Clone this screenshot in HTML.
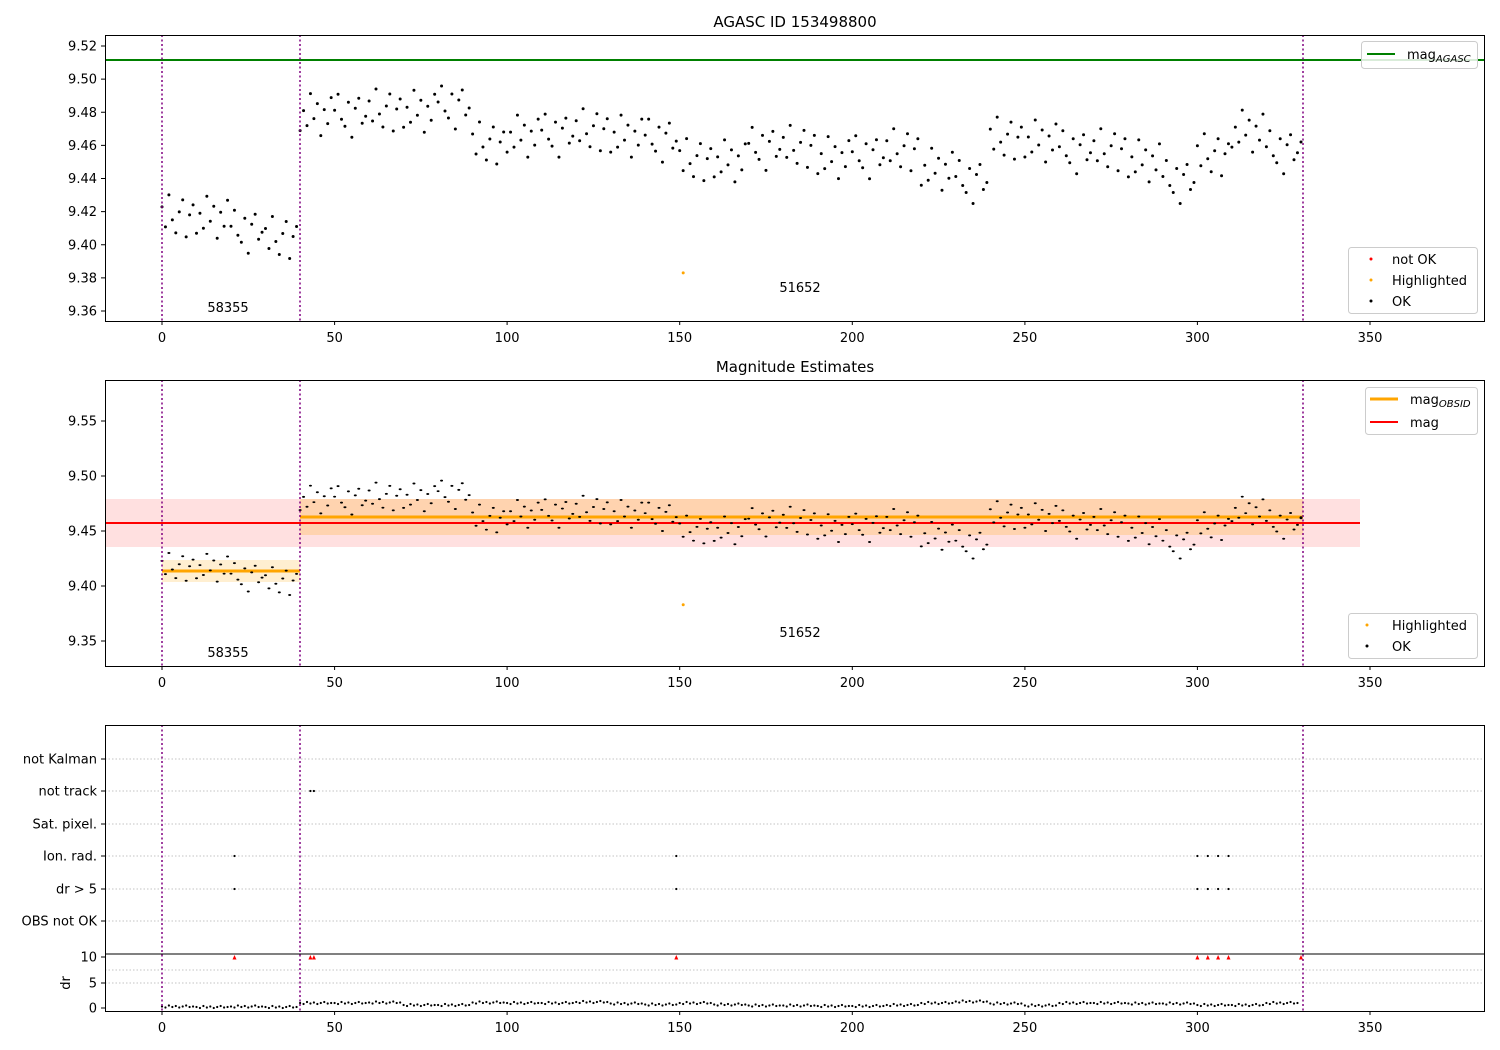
<!DOCTYPE html>
<html><head><meta charset="utf-8"><style>
html,body{margin:0;padding:0;background:#fff;}
svg{display:block;font-family:"DejaVu Sans","Liberation Sans",sans-serif;}
</style></head><body>
<svg width="1500" height="1050" viewBox="0 0 1500 1050" xmlns="http://www.w3.org/2000/svg">
<defs>
<path id="g0" d="M0 -8h0M3.45 12h0M6.9 -20h0M10.35 5h0M13.8 18h0M17.26 -3h0M20.7 -15h0M24.16 22h0M27.6 0h0M31.06 -10h0" stroke="#000" stroke-width="3" stroke-linecap="round" fill="none"/>
<path id="g1" d="M0 15h0M3.45 -5h0M6.9 10h0M10.35 -22h0M13.8 3h0M17.26 -12h0M20.7 20h0M24.16 -6h0M27.6 8h0M31.06 -18h0" stroke="#000" stroke-width="3" stroke-linecap="round" fill="none"/>
<path id="g2" d="M0 -2h0M3.45 -18h0M6.9 7h0M10.35 14h0M13.8 -10h0M17.26 25h0M20.7 -4h0M24.16 -14h0M27.6 11h0M31.06 4h0" stroke="#000" stroke-width="3" stroke-linecap="round" fill="none"/>
<path id="d0" d="M0 0h0M3.45 1h0M6.9 -1h0M10.35 0.5h0M13.8 -0.5h0M17.26 1h0M20.7 0h0M24.16 -1h0M27.6 0.5h0M31.06 0h0" stroke="#000" stroke-width="2.2" stroke-linecap="round" fill="none"/>
</defs>
<rect width="1500" height="1050" fill="#fff"/>
<g font-size="13" fill="#000">
<text x="795" y="27" text-anchor="middle" font-size="15">AGASC ID 153498800</text>
<text x="795" y="372" text-anchor="middle" font-size="15">Magnitude Estimates</text>

<rect x="105" y="499" width="1255" height="48" fill="#ff0000" fill-opacity="0.12"/>
<rect x="162" y="560" width="138" height="22" fill="#ffa500" fill-opacity="0.18"/>
<rect x="300" y="499" width="1003" height="36" fill="#ffa500" fill-opacity="0.22"/>
<line x1="105" y1="523" x2="1360" y2="523" stroke="#f00" stroke-width="2"/>
<line x1="162" y1="571" x2="300" y2="571" stroke="#ffa500" stroke-width="3"/>
<line x1="300" y1="517" x2="1303" y2="517" stroke="#ffa500" stroke-width="3"/>
<line x1="105" y1="60" x2="1485" y2="60" stroke="#008000" stroke-width="2"/>

<g stroke="#b0b0b0" stroke-width="0.8" stroke-dasharray="1.5,2">
<line x1="105" y1="759" x2="1485" y2="759"/><line x1="105" y1="791" x2="1485" y2="791"/>
<line x1="105" y1="824" x2="1485" y2="824"/><line x1="105" y1="856" x2="1485" y2="856"/>
<line x1="105" y1="889" x2="1485" y2="889"/><line x1="105" y1="921" x2="1485" y2="921"/>
<line x1="105" y1="983" x2="1485" y2="983"/><line x1="105" y1="970" x2="1485" y2="970"/>
</g>
<line x1="105" y1="954" x2="1485" y2="954" stroke="#000" stroke-width="1"/>

<!-- axes1 points -->
<g>
<use href="#g0" x="162" y="214.9"/><use href="#g1" x="196.5" y="218.3"/><use href="#g2" x="231" y="228.2"/><use href="#g0" x="265.5" y="236.5"/>
<use href="#g1" x="300.1" y="115.6"/><use href="#g2" x="334.6" y="112.3"/><use href="#g0" x="369.1" y="109"/><use href="#g1" x="403.6" y="112.3"/>
<use href="#g2" x="438.1" y="104"/><use href="#g0" x="472.6" y="142"/><use href="#g1" x="507.1" y="137.1"/><use href="#g2" x="541.7" y="132.1"/>
<use href="#g0" x="576.2" y="128.8"/><use href="#g1" x="610.7" y="137.1"/><use href="#g2" x="645.2" y="137.1"/><use href="#g0" x="679.7" y="158.6"/>
<use href="#g1" x="714.2" y="161.9"/><use href="#g2" x="748.7" y="145.4"/><use href="#g0" x="783.3" y="145.4"/><use href="#g1" x="817.8" y="158.6"/>
<use href="#g2" x="852.3" y="153.7"/><use href="#g0" x="886.8" y="148.7"/><use href="#g1" x="921.3" y="170.2"/><use href="#g2" x="955.8" y="178.5"/>
<use href="#g0" x="990.3" y="137.1"/><use href="#g1" x="1024.9" y="142"/><use href="#g2" x="1059.4" y="148.7"/><use href="#g0" x="1093.9" y="148.7"/>
<use href="#g1" x="1128.4" y="161.9"/><use href="#g2" x="1162.9" y="178.5"/><use href="#g0" x="1197.4" y="153.7"/><use href="#g1" x="1231.9" y="132.1"/>
<use href="#g2" x="1266.4" y="148.7"/>
<circle cx="1301" cy="142" r="1.5"/>
<circle cx="683.2" cy="272.9" r="1.5" fill="#ffa500"/>
</g>
<!-- axes2 points -->
<g>
<use href="#g0" transform="translate(162,566.2) scale(1,0.66)"/><use href="#g1" transform="translate(196.5,568.4) scale(1,0.66)"/><use href="#g2" transform="translate(231,575) scale(1,0.66)"/><use href="#g0" transform="translate(265.5,580.5) scale(1,0.66)"/>
<use href="#g1" transform="translate(300.1,500.2) scale(1,0.66)"/><use href="#g2" transform="translate(334.6,498) scale(1,0.66)"/><use href="#g0" transform="translate(369.1,495.8) scale(1,0.66)"/><use href="#g1" transform="translate(403.6,498) scale(1,0.66)"/>
<use href="#g2" transform="translate(438.1,492.5) scale(1,0.66)"/><use href="#g0" transform="translate(472.6,517.8) scale(1,0.66)"/><use href="#g1" transform="translate(507.1,514.5) scale(1,0.66)"/><use href="#g2" transform="translate(541.7,511.2) scale(1,0.66)"/>
<use href="#g0" transform="translate(576.2,509) scale(1,0.66)"/><use href="#g1" transform="translate(610.7,514.5) scale(1,0.66)"/><use href="#g2" transform="translate(645.2,514.5) scale(1,0.66)"/><use href="#g0" transform="translate(679.7,528.8) scale(1,0.66)"/>
<use href="#g1" transform="translate(714.2,531) scale(1,0.66)"/><use href="#g2" transform="translate(748.7,520) scale(1,0.66)"/><use href="#g0" transform="translate(783.3,520) scale(1,0.66)"/><use href="#g1" transform="translate(817.8,528.8) scale(1,0.66)"/>
<use href="#g2" transform="translate(852.3,525.5) scale(1,0.66)"/><use href="#g0" transform="translate(886.8,522.2) scale(1,0.66)"/><use href="#g1" transform="translate(921.3,536.5) scale(1,0.66)"/><use href="#g2" transform="translate(955.8,542) scale(1,0.66)"/>
<use href="#g0" transform="translate(990.3,514.5) scale(1,0.66)"/><use href="#g1" transform="translate(1024.9,517.8) scale(1,0.66)"/><use href="#g2" transform="translate(1059.4,522.2) scale(1,0.66)"/><use href="#g0" transform="translate(1093.9,522.2) scale(1,0.66)"/>
<use href="#g1" transform="translate(1128.4,531) scale(1,0.66)"/><use href="#g2" transform="translate(1162.9,542) scale(1,0.66)"/><use href="#g0" transform="translate(1197.4,525.5) scale(1,0.66)"/><use href="#g1" transform="translate(1231.9,511.2) scale(1,0.66)"/>
<use href="#g2" transform="translate(1266.4,522.2) scale(1,0.66)"/>
<circle cx="1301" cy="517.8" r="1.5"/>
<circle cx="683.2" cy="604.7" r="1.5" fill="#ffa500"/>
</g>
<!-- axes3 points -->
<g>
<use href="#d0" x="162" y="1006.5"/><use href="#d0" x="196.5" y="1007"/><use href="#d0" x="231" y="1006.5"/><use href="#d0" x="265.5" y="1007"/>
<use href="#d0" x="300.1" y="1003"/><use href="#d0" x="334.6" y="1003"/><use href="#d0" x="369.1" y="1002.5"/><use href="#d0" x="403.6" y="1005"/>
<use href="#d0" x="438.1" y="1005"/><use href="#d0" x="472.6" y="1002.5"/><use href="#d0" x="507.1" y="1003"/><use href="#d0" x="541.7" y="1003"/>
<use href="#d0" x="576.2" y="1002"/><use href="#d0" x="610.7" y="1003.5"/><use href="#d0" x="645.2" y="1004.5"/><use href="#d0" x="679.7" y="1003"/>
<use href="#d0" x="714.2" y="1004.5"/><use href="#d0" x="748.7" y="1005.5"/><use href="#d0" x="783.3" y="1005.5"/><use href="#d0" x="817.8" y="1006"/>
<use href="#d0" x="852.3" y="1006"/><use href="#d0" x="886.8" y="1005"/><use href="#d0" x="921.3" y="1003"/><use href="#d0" x="955.8" y="1001.5"/>
<use href="#d0" x="990.3" y="1003.5"/><use href="#d0" x="1024.9" y="1005.5"/><use href="#d0" x="1059.4" y="1003"/><use href="#d0" x="1093.9" y="1003"/>
<use href="#d0" x="1128.4" y="1003.5"/><use href="#d0" x="1162.9" y="1003.5"/><use href="#d0" x="1197.4" y="1005"/><use href="#d0" x="1231.9" y="1005"/>
<use href="#d0" x="1266.4" y="1003"/>
<g fill="#000">
<circle cx="310.4" cy="791" r="1.1"/><circle cx="313.9" cy="791" r="1.1"/>
<circle cx="234.5" cy="856" r="1.1"/><circle cx="676.3" cy="856" r="1.1"/><circle cx="1197.4" cy="856" r="1.1"/><circle cx="1207.8" cy="856" r="1.1"/><circle cx="1218.1" cy="856" r="1.1"/><circle cx="1228.5" cy="856" r="1.1"/>
<circle cx="234.5" cy="889" r="1.1"/><circle cx="676.3" cy="889" r="1.1"/><circle cx="1197.4" cy="889" r="1.1"/><circle cx="1207.8" cy="889" r="1.1"/><circle cx="1218.1" cy="889" r="1.1"/><circle cx="1228.5" cy="889" r="1.1"/>
</g>
<g fill="#f00">
<polygon points="232.5,959.5 236.5,959.5 234.5,955"/><polygon points="308.4,959.5 312.4,959.5 310.4,955"/><polygon points="311.9,959.5 315.9,959.5 313.9,955"/>
<polygon points="674.3,959.5 678.3,959.5 676.3,955"/><polygon points="1195.4,959.5 1199.4,959.5 1197.4,955"/><polygon points="1205.8,959.5 1209.8,959.5 1207.8,955"/>
<polygon points="1216.1,959.5 1220.1,959.5 1218.1,955"/><polygon points="1226.5,959.5 1230.5,959.5 1228.5,955"/><polygon points="1299,959.5 1303,959.5 1301,955"/>
</g>
</g>

<g stroke="#800080" stroke-width="1.5" stroke-dasharray="2,2.5">
<line x1="162" y1="35" x2="162" y2="321"/><line x1="300" y1="35" x2="300" y2="321"/><line x1="1303" y1="35" x2="1303" y2="321"/>
<line x1="162" y1="380" x2="162" y2="666"/><line x1="300" y1="380" x2="300" y2="666"/><line x1="1303" y1="380" x2="1303" y2="666"/>
<line x1="162" y1="725" x2="162" y2="1011"/><line x1="300" y1="725" x2="300" y2="1011"/><line x1="1303" y1="725" x2="1303" y2="1011"/>
</g>

<g fill="none" stroke="#000" stroke-width="1">
<rect x="105.5" y="35.5" width="1379" height="286"/>
<rect x="105.5" y="380.5" width="1379" height="286"/>
<rect x="105.5" y="725.5" width="1379" height="286"/>
</g>

<text x="228" y="312" text-anchor="middle">58355</text>
<text x="800" y="292" text-anchor="middle">51652</text>
<text x="228" y="657" text-anchor="middle">58355</text>
<text x="800" y="637" text-anchor="middle">51652</text>

<!-- x ticks -->
<g stroke="#000">
<path d="M162 321v4M334.6 321v4M507.1 321v4M679.7 321v4M852.3 321v4M1024.9 321v4M1197.4 321v4M1370 321v4"/>
<path d="M162 666v4M334.6 666v4M507.1 666v4M679.7 666v4M852.3 666v4M1024.9 666v4M1197.4 666v4M1370 666v4"/>
<path d="M162 1011v4M334.6 1011v4M507.1 1011v4M679.7 1011v4M852.3 1011v4M1024.9 1011v4M1197.4 1011v4M1370 1011v4"/>
<path d="M101 311h4M101 277.9h4M101 244.8h4M101 211.6h4M101 178.5h4M101 145.4h4M101 112.3h4M101 79.1h4M101 46h4"/>
<path d="M101 641h4M101 586h4M101 531h4M101 476h4M101 421h4"/>
<path d="M101 759h4M101 791h4M101 824h4M101 856h4M101 889h4M101 921h4M101 957h4M101 983h4M101 1008h4"/>
</g>
<g text-anchor="middle">
<text x="162" y="342">0</text><text x="334.6" y="342">50</text><text x="507.1" y="342">100</text><text x="679.7" y="342">150</text><text x="852.3" y="342">200</text><text x="1024.9" y="342">250</text><text x="1197.4" y="342">300</text><text x="1370" y="342">350</text>
<text x="162" y="687">0</text><text x="334.6" y="687">50</text><text x="507.1" y="687">100</text><text x="679.7" y="687">150</text><text x="852.3" y="687">200</text><text x="1024.9" y="687">250</text><text x="1197.4" y="687">300</text><text x="1370" y="687">350</text>
<text x="162" y="1032">0</text><text x="334.6" y="1032">50</text><text x="507.1" y="1032">100</text><text x="679.7" y="1032">150</text><text x="852.3" y="1032">200</text><text x="1024.9" y="1032">250</text><text x="1197.4" y="1032">300</text><text x="1370" y="1032">350</text>
</g>
<g text-anchor="end">
<text x="97" y="315.5">9.36</text><text x="97" y="282.4">9.38</text><text x="97" y="249.3">9.40</text><text x="97" y="216.1">9.42</text><text x="97" y="183">9.44</text><text x="97" y="149.9">9.46</text><text x="97" y="116.8">9.48</text><text x="97" y="83.6">9.50</text><text x="97" y="50.5">9.52</text>
<text x="97" y="645.5">9.35</text><text x="97" y="590.5">9.40</text><text x="97" y="535.5">9.45</text><text x="97" y="480.5">9.50</text><text x="97" y="425.5">9.55</text>
<text x="97" y="763.5">not Kalman</text><text x="97" y="795.5">not track</text><text x="97" y="828.5">Sat. pixel.</text><text x="97" y="860.5">Ion. rad.</text><text x="97" y="893.5">dr &gt; 5</text><text x="97" y="925.5">OBS not OK</text><text x="97" y="961.5">10</text><text x="97" y="987.5">5</text><text x="97" y="1012.5">0</text>
</g>

<rect x="1361.5" y="41.5" width="116" height="27" rx="3" fill="#fff" fill-opacity="0.85" stroke="#ccc"/>
<line x1="1367" y1="54" x2="1395" y2="54" stroke="#008000" stroke-width="2"/>
<text x="1407" y="59">mag<tspan font-size="10" font-style="italic" dy="3">AGASC</tspan></text>

<rect x="1348.5" y="247.5" width="129" height="66" rx="3" fill="#fff" fill-opacity="0.85" stroke="#ccc"/>
<circle cx="1371" cy="259" r="1.5" fill="#f00"/><text x="1392" y="264">not OK</text>
<circle cx="1371" cy="280" r="1.5" fill="#ffa500"/><text x="1392" y="285">Highlighted</text>
<circle cx="1371" cy="301" r="1.5" fill="#000"/><text x="1392" y="306">OK</text>

<rect x="1365.5" y="387.5" width="112" height="47" rx="3" fill="#fff" fill-opacity="0.85" stroke="#ccc"/>
<line x1="1370" y1="399" x2="1398" y2="399" stroke="#ffa500" stroke-width="3"/>
<text x="1410" y="404">mag<tspan font-size="10" font-style="italic" dy="3">OBSID</tspan></text>
<line x1="1370" y1="422" x2="1398" y2="422" stroke="#f00" stroke-width="2"/>
<text x="1410" y="427">mag</text>

<rect x="1348.5" y="613.5" width="129" height="45" rx="3" fill="#fff" fill-opacity="0.85" stroke="#ccc"/>
<circle cx="1367" cy="625" r="1.5" fill="#ffa500"/><text x="1392" y="630">Highlighted</text>
<circle cx="1367" cy="646" r="1.5" fill="#000"/><text x="1392" y="651">OK</text>
<text transform="translate(70,983) rotate(-90)" text-anchor="middle">dr</text>
</g>
</svg>
</body></html>
